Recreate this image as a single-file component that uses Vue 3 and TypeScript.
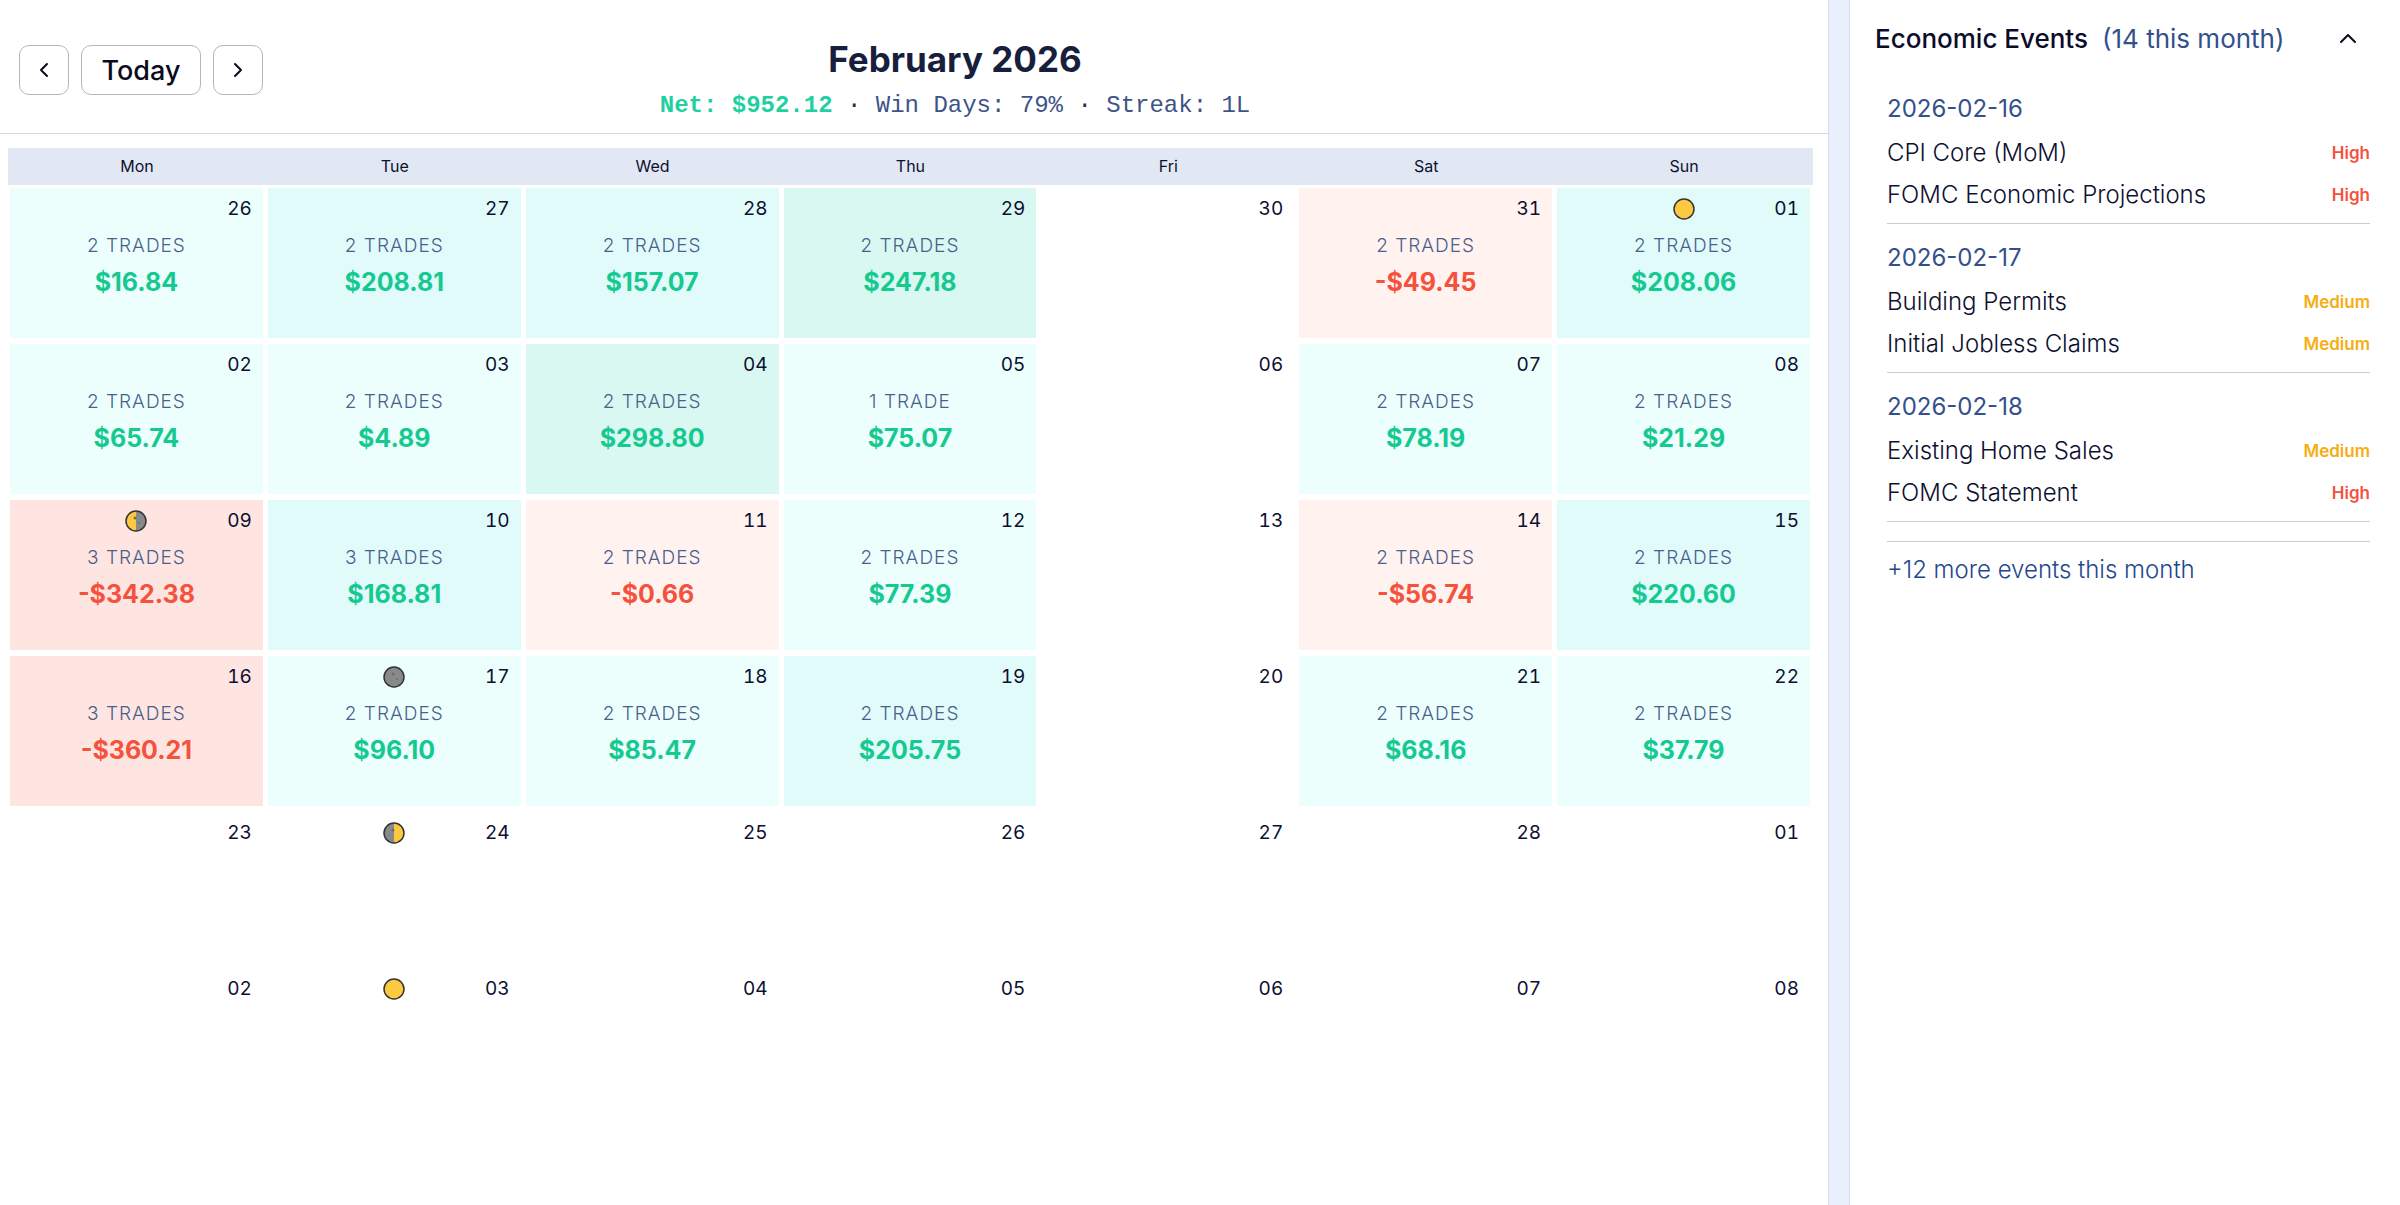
<script setup lang="ts">
import { computed, ref } from 'vue'

type Tone = '' | 'gain-1' | 'gain-2' | 'gain-3' | 'loss-1' | 'loss-2'
type Moon = 'full' | 'last' | 'new' | 'first'

interface Day {
  date: string
  trades?: number
  amount?: string
  tone?: Tone
  moon?: Moon
}

interface EconomicEvent {
  name: string
  impact: 'High' | 'Medium'
}

interface EventGroup {
  date: string
  events: EconomicEvent[]
}

const weekdays = ['Mon', 'Tue', 'Wed', 'Thu', 'Fri', 'Sat', 'Sun']

const days: Day[] = [
  { date: '26', trades: 2, amount: '$16.84', tone: 'gain-1' },
  { date: '27', trades: 2, amount: '$208.81', tone: 'gain-2' },
  { date: '28', trades: 2, amount: '$157.07', tone: 'gain-2' },
  { date: '29', trades: 2, amount: '$247.18', tone: 'gain-3' },
  { date: '30' },
  { date: '31', trades: 2, amount: '-$49.45', tone: 'loss-1' },
  { date: '01', trades: 2, amount: '$208.06', tone: 'gain-2', moon: 'full' },
  { date: '02', trades: 2, amount: '$65.74', tone: 'gain-1' },
  { date: '03', trades: 2, amount: '$4.89', tone: 'gain-1' },
  { date: '04', trades: 2, amount: '$298.80', tone: 'gain-3' },
  { date: '05', trades: 1, amount: '$75.07', tone: 'gain-1' },
  { date: '06' },
  { date: '07', trades: 2, amount: '$78.19', tone: 'gain-1' },
  { date: '08', trades: 2, amount: '$21.29', tone: 'gain-1' },
  { date: '09', trades: 3, amount: '-$342.38', tone: 'loss-2', moon: 'last' },
  { date: '10', trades: 3, amount: '$168.81', tone: 'gain-2' },
  { date: '11', trades: 2, amount: '-$0.66', tone: 'loss-1' },
  { date: '12', trades: 2, amount: '$77.39', tone: 'gain-1' },
  { date: '13' },
  { date: '14', trades: 2, amount: '-$56.74', tone: 'loss-1' },
  { date: '15', trades: 2, amount: '$220.60', tone: 'gain-2' },
  { date: '16', trades: 3, amount: '-$360.21', tone: 'loss-2' },
  { date: '17', trades: 2, amount: '$96.10', tone: 'gain-1', moon: 'new' },
  { date: '18', trades: 2, amount: '$85.47', tone: 'gain-1' },
  { date: '19', trades: 2, amount: '$205.75', tone: 'gain-2' },
  { date: '20' },
  { date: '21', trades: 2, amount: '$68.16', tone: 'gain-1' },
  { date: '22', trades: 2, amount: '$37.79', tone: 'gain-1' },
  { date: '23' },
  { date: '24', moon: 'first' },
  { date: '25' },
  { date: '26' },
  { date: '27' },
  { date: '28' },
  { date: '01' },
  { date: '02' },
  { date: '03', moon: 'full' },
  { date: '04' },
  { date: '05' },
  { date: '06' },
  { date: '07' },
  { date: '08' },
]

const weeks = computed(() =>
  Array.from({ length: days.length / 7 }, (_, i) => days.slice(i * 7, i * 7 + 7)),
)

const groups: EventGroup[] = [
  {
    date: '2026-02-16',
    events: [
      { name: 'CPI Core (MoM)', impact: 'High' },
      { name: 'FOMC Economic Projections', impact: 'High' },
    ],
  },
  {
    date: '2026-02-17',
    events: [
      { name: 'Building Permits', impact: 'Medium' },
      { name: 'Initial Jobless Claims', impact: 'Medium' },
    ],
  },
  {
    date: '2026-02-18',
    events: [
      { name: 'Existing Home Sales', impact: 'Medium' },
      { name: 'FOMC Statement', impact: 'High' },
    ],
  },
]

const open = ref(true)
</script>

<template>
  <div class="page">
    <main class="calendar">
      <header class="toolbar">
        <nav class="nav">
          <button class="nav-btn" type="button" aria-label="Previous month">
            <svg width="12" height="18" viewBox="0 0 12 18"><path d="M9 3 3 9l6 6" /></svg>
          </button>
          <button class="nav-btn today" type="button">Today</button>
          <button class="nav-btn" type="button" aria-label="Next month">
            <svg width="12" height="18" viewBox="0 0 12 18"><path d="m3 3 6 6-6 6" /></svg>
          </button>
        </nav>
        <div class="heading">
          <h1>February 2026</h1>
          <p class="stats">
            <strong>Net: $952.12</strong> <i>·</i> <span>Win Days: 79%</span> <i>·</i> <span>Streak: 1L</span>
          </p>
        </div>
      </header>

      <div class="sheet">
        <table>
          <thead>
            <tr>
              <th v-for="day in weekdays" :key="day" scope="col">{{ day }}</th>
            </tr>
          </thead>
          <tbody>
            <tr v-for="(week, w) in weeks" :key="w">
              <td v-for="(day, d) in week" :key="d">
                <div class="day" :class="day.tone">
                  <div class="day-top">
                    <svg v-if="day.moon" class="moon" width="24" height="24" viewBox="0 0 24 24">
                      <circle cx="12" cy="12" r="10" :fill="day.moon === 'full' ? '#fdc940' : '#878a88'" />
                      <circle v-if="day.moon !== 'full'" cx="15" cy="14" r="1" fill="#6c6e6d" />
                      <path v-if="day.moon === 'last'" d="M12 2a10 10 0 0 0 0 20z" fill="#fdc940" />
                      <path v-if="day.moon === 'first'" d="M12 2a10 10 0 0 1 0 20z" fill="#fdc940" />
                      <circle v-if="day.moon !== 'full'" cx="11" cy="9" r="1.5" fill="#6c6e6d" />
                      <circle cx="12" cy="12" r="10" fill="none" stroke="#333" stroke-width="1.5" />
                    </svg>
                    <time>{{ day.date }}</time>
                  </div>
                  <template v-if="day.trades">
                    <span class="trades">{{ day.trades }} {{ day.trades === 1 ? 'trade' : 'trades' }}</span>
                    <span class="amount">{{ day.amount }}</span>
                  </template>
                </div>
              </td>
            </tr>
          </tbody>
        </table>
      </div>
    </main>

    <div class="gutter"></div>

    <aside class="events">
      <button class="events-head" type="button" :aria-expanded="open" @click="open = !open">
        <span>Economic Events</span>
        <span class="count">(14 this month)</span>
        <svg width="20" height="20" viewBox="0 0 20 20"><path d="m3 13 7-7 7 7" /></svg>
      </button>
      <div v-if="open" class="events-body">
        <section v-for="group in groups" :key="group.date" class="group">
          <h2>{{ group.date }}</h2>
          <ul>
            <li v-for="event in group.events" :key="event.name">
              <span>{{ event.name }}</span>
              <span class="impact" :class="event.impact.toLowerCase()">{{ event.impact }}</span>
            </li>
          </ul>
        </section>
        <p class="more">+12 more events this month</p>
      </div>
    </aside>
  </div>
</template>

<style>
body {
  margin: 0;
  background: #fff;
}
</style>

<style scoped>
.page {
  display: flex;
  min-height: 100vh;
  font-family: Inter, "Liberation Sans", sans-serif;
  color: #0d1030;
}

.calendar {
  flex: 1;
  min-width: 0;
}

.toolbar {
  display: grid;
  grid-template-columns: 263px 1fr 200px;
  box-sizing: border-box;
  height: 134px;
  padding-left: 19px;
  border-bottom: 1px solid #d6d8dd;
}

.nav {
  display: flex;
  gap: 12px;
  align-items: flex-start;
  padding-top: 45px;
}

.nav-btn {
  display: flex;
  align-items: center;
  justify-content: center;
  box-sizing: border-box;
  width: 50px;
  height: 50px;
  padding: 0;
  border: 1px solid #b4b6bc;
  border-radius: 10px;
  background: #fff;
  color: #0a0c1e;
  font: 500 27px/32px Inter, "Liberation Sans", sans-serif;
}

.nav-btn.today {
  width: 120px;
  padding-top: 2px;
}

svg path {
  stroke-linecap: round;
  stroke-linejoin: round;
}

.nav-btn svg,
.events-head svg {
  fill: none;
  stroke: #0a0c1e;
  stroke-width: 2;
}

.heading {
  text-align: center;
}

h1 {
  margin: 36px 0 0;
  font-size: 35px;
  line-height: 46px;
  font-weight: 700;
  color: #171f3d;
}

.stats {
  margin: 10px 0 0;
  font: 24px/28px "Liberation Mono", monospace;
  color: #3d5488;
}

.stats strong {
  color: #1fd0a0;
}

.stats i {
  font-style: normal;
  color: #2a3048;
}

.sheet {
  padding: 14px 15px 0 8px;
}

table {
  width: 100%;
  table-layout: fixed;
  border-collapse: collapse;
}

th {
  height: 35px;
  padding: 0 0 2px;
  background: #e2e8f3;
  font-size: 16px;
  line-height: 20px;
  font-weight: 400;
}

td {
  padding: 3px 3px 3px 2px;
}

.day {
  display: flex;
  flex-direction: column;
  align-items: center;
  height: 150px;
}

.day-top {
  position: relative;
  display: flex;
  align-items: center;
  justify-content: center;
  width: 100%;
  height: 24px;
  margin: 9px 0 11px;
}

.day-top time {
  position: absolute;
  right: 11px;
  font-size: 19px;
  line-height: 24px;
  font-variant-numeric: tabular-nums;
}

.trades {
  font-size: 19px;
  line-height: 28px;
  font-weight: 300;
  letter-spacing: 1px;
  text-transform: uppercase;
  color: #4a5f8c;
}

.amount {
  margin-top: 6px;
  font-size: 25px;
  line-height: 32px;
  font-weight: 700;
}

.gain-1 {
  background: #ecfffd;
}

.gain-2 {
  background: #e0fbfa;
}

.gain-3 {
  background: #d8f8f1;
}

.loss-1 {
  background: #fff2ef;
}

.loss-2 {
  background: #fee5e2;
}

.gain-1 .amount,
.gain-2 .amount,
.gain-3 .amount {
  color: #16c991;
}

.loss-1 .amount,
.loss-2 .amount {
  color: #f4523d;
}

.gutter {
  box-sizing: border-box;
  width: 22px;
  border: solid #d5dae6;
  border-width: 0 1px;
  background: #eaf1fc;
}

.events {
  box-sizing: border-box;
  width: 550px;
  padding: 21px 30px 0 25px;
}

.events-head {
  display: flex;
  align-items: center;
  width: 100%;
  padding: 0 12px 0 0;
  border: 0;
  background: none;
  color: #0a0c2a;
  font: 500 26px/36px Inter, "Liberation Sans", sans-serif;
}

.count {
  margin-left: 14px;
  font-weight: 400;
  color: #34508c;
}

.events-head svg {
  margin-left: auto;
}

.events-body {
  padding: 32px 0 0 12px;
}

.group {
  margin-bottom: 14px;
  border-bottom: 1px solid #cbcdd2;
}

h2 {
  margin: 0;
  font-size: 24px;
  line-height: 40px;
  font-weight: 400;
  color: #34508c;
}

ul {
  margin: 0;
  padding: 3px 0 7px;
  list-style: none;
}

li {
  display: flex;
  align-items: center;
  justify-content: space-between;
  font-size: 24px;
  line-height: 42px;
  font-weight: 300;
}

.impact {
  font-size: 17px;
  font-weight: 600;
}

.high {
  color: #f4523d;
}

.medium {
  color: #f5ae12;
}

.more {
  margin: 19px 0 0;
  padding-top: 12px;
  border-top: 1px solid #cbcdd2;
  font-size: 24px;
  line-height: 32px;
  font-weight: 300;
  color: #24478c;
}
</style>
